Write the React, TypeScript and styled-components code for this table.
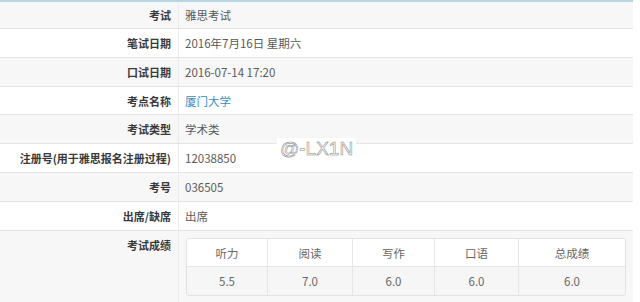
import { FC } from "react";
import styled, { createGlobalStyle } from "styled-components";

const GlobalStyle = createGlobalStyle`
  body {
    margin: 0;
    background: #ffffff;
    font-family: "Noto Sans CJK SC", "Noto Sans", "Liberation Sans", sans-serif;
  }
`

const Page = styled.div`
  position: relative;
  width: 640px;
  height: 302px;
  overflow: hidden;
  background: #fff;
`

const Table = styled.div`
  width: 633px;
  border-top: 2px solid #b7d5df;
  box-sizing: border-box;
`

interface IRow {
    striped?: boolean
    h?: number
    last?: boolean
}

const Row = styled.div<IRow>`
  display: grid;
  grid-template-columns: 179px 1fr;
  height: ${({h = 29}) => h}px;
  box-sizing: border-box;
  border-bottom: ${({last}) => last ? 'none' : '1px solid #e4e4e4'};
  background: ${({striped}) => striped ? '#f7f7f7' : '#ffffff'};
  font-size: 11px;
`

interface ILabel {
    top?: boolean
}

const Label = styled.div<ILabel>`
  display: flex;
  align-items: ${({top}) => top ? 'flex-start' : 'center'};
  justify-content: flex-end;
  padding-right: 7px;
  padding-top: ${({top}) => top ? '6px' : '0'};
  border-right: 1px solid #ececec;
  font-weight: 700;
  color: #3a3a3a;
  white-space: nowrap;
`

const Value = styled.div`
  display: flex;
  align-items: center;
  padding-left: 6px;
  color: #5a5a5a;
  font-size: 11.5px;
  white-space: nowrap;
`

const LinkText = styled.span`
  color: #3a8dbf;
`

const ScoreCell = styled.div`
  padding: 7px 0 0 7px;
`

const Scores = styled.div`
  width: 440px;
  border: 1px solid #e2e2e2;
  border-radius: 3px;
  overflow: hidden;
  box-sizing: border-box;
`

interface IScoreRow {
    grey?: boolean
}

const ScoreRow = styled.div<IScoreRow>`
  display: grid;
  grid-template-columns: 81px 85px 82px 84px 1fr;
  height: 28px;
  background: ${({grey}) => grey ? '#f6f6f6' : '#ffffff'};
  border-bottom: ${({grey}) => grey ? 'none' : '1px solid #e6e6e6'};
  box-sizing: border-box;
`

const ScoreItem = styled.div`
  display: flex;
  align-items: center;
  justify-content: center;
  color: #666;
  font-size: 11.5px;
  border-right: 1px solid #e6e6e6;

  &:last-child {
    border-right: none;
  }
`

const Watermark = styled.span`
  position: absolute;
  left: 277px;
  top: 138px;
  padding: 0 3px;
  background: #fff;
  font-family: "Liberation Sans", sans-serif;
  font-size: 19px;
  line-height: 22px;
  color: #fff;
  -webkit-text-stroke: 0.5px #808080;
`

interface IField {
    label: string
    value: string
    link?: boolean
    h?: number
}

const fields: IField[] = [
    {label: '考试', value: '雅思考试', h: 27},
    {label: '笔试日期', value: '2016年7月16日 星期六'},
    {label: '口试日期', value: '2016-07-14 17:20'},
    {label: '考点名称', value: '厦门大学', link: true, h: 28},
    {label: '考试类型', value: '学术类'},
    {label: '注册号(用于雅思报名注册过程)', value: '12038850'},
    {label: '考号', value: '036505'},
    {label: '出席/缺席', value: '出席'},
]

const scoreHeads = ['听力', '阅读', '写作', '口语', '总成绩']
const scoreVals = ['5.5', '7.0', '6.0', '6.0', '6.0']

const App: FC = () => {
    return (
        <Page>
            <GlobalStyle/>
            <Table>
                {fields.map((f, i) => (
                    <Row key={f.label} striped={i % 2 === 0} h={f.h}>
                        <Label>{f.label}</Label>
                        <Value>{f.link ? <LinkText>{f.value}</LinkText> : f.value}</Value>
                    </Row>
                ))}
                <Row h={71} striped last>
                    <Label top>考试成绩</Label>
                    <ScoreCell>
                        <Scores>
                            <ScoreRow>
                                {scoreHeads.map(s => <ScoreItem key={s}>{s}</ScoreItem>)}
                            </ScoreRow>
                            <ScoreRow grey>
                                {scoreVals.map((s, i) => <ScoreItem key={i}>{s}</ScoreItem>)}
                            </ScoreRow>
                        </Scores>
                    </ScoreCell>
                </Row>
            </Table>
            <Watermark>@-LX1N</Watermark>
        </Page>
    )
}

export default App
